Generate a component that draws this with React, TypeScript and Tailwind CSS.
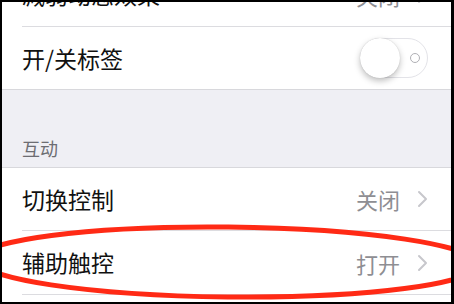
import React from "react";

const Chevron = () => (
  <svg width="11" height="18" viewBox="0 0 11 18" className="shrink-0">
    <polyline
      points="2,2 9,9 2,16"
      fill="none"
      stroke="#c7c7cc"
      strokeWidth="2"
      strokeLinecap="round"
      strokeLinejoin="round"
    />
  </svg>
);

interface RowProps {
  label: string;
  value?: string;
  height: string;
  children?: React.ReactNode;
}

const Row: React.FC<RowProps> = ({ label, value, height, children }) => {
  return (
    <div className={`flex items-center justify-between pl-[20px] pr-[23px] ${height}`}>
      <span className="text-[23px] leading-none text-[#111]">{label}</span>
      {value && (
        <div className="flex items-center gap-[17px]">
          <span className="text-[22px] leading-none text-[#8e8e93]">{value}</span>
          <Chevron />
        </div>
      )}
      {children}
    </div>
  );
};

const Toggle = () => (
  <div className="relative h-[40px] w-[68px] rounded-full border border-[#e3e3e8] bg-white">
    <div className="absolute left-[-1px] top-[-1px] h-[40px] w-[40px] rounded-full bg-white shadow-[0_3px_6px_rgba(0,0,0,0.25),0_0_1px_rgba(0,0,0,0.2)]" />
    <div className="absolute left-[49px] top-[14px] h-[10px] w-[10px] rounded-full border-[1.5px] border-[#b0b0b5]" />
  </div>
);

const Divider = () => <div className="ml-[20px] h-px bg-[#dcdce0]" />;

export default function App() {
  return (
    <div className="h-[304px] w-[454px] bg-black pb-[2px] pl-[2px] pr-[3px] pt-[2px]">
      <div className="relative h-full overflow-hidden bg-white font-['Noto_Sans_CJK_SC',sans-serif]">
        <div className="mt-[-39px]">
          <Row label="减弱动态效果" value="关闭" height="h-[63px]" />
          <Divider />
          <Row label="开/关标签" height="h-[62px]">
            <Toggle />
          </Row>
          <div className="h-px bg-[#d8d8dc]" />
          <div className="flex h-[77px] items-end bg-[#efeff4] pb-[7px] pl-[20px]">
            <span className="text-[18px] leading-[24px] text-[#6d6d72]">互动</span>
          </div>
          <div className="h-px bg-[#d8d8dc]" />
          <Row label="切换控制" value="关闭" height="h-[62px]" />
          <Divider />
          <Row label="辅助触控" value="打开" height="h-[63px]" />
          <Divider />
        </div>

        <svg
          className="pointer-events-none absolute inset-0"
          width="449"
          height="300"
          viewBox="0 0 449 300"
        >
          <g transform="translate(-2,-2)">
            <ellipse
              cx="228"
              cy="262"
              rx="250"
              ry="35"
              fill="none"
              stroke="#ff2a15"
              strokeWidth="5"
              transform="rotate(0.6 228 262)"
            />
          </g>
        </svg>
      </div>
    </div>
  );
}
